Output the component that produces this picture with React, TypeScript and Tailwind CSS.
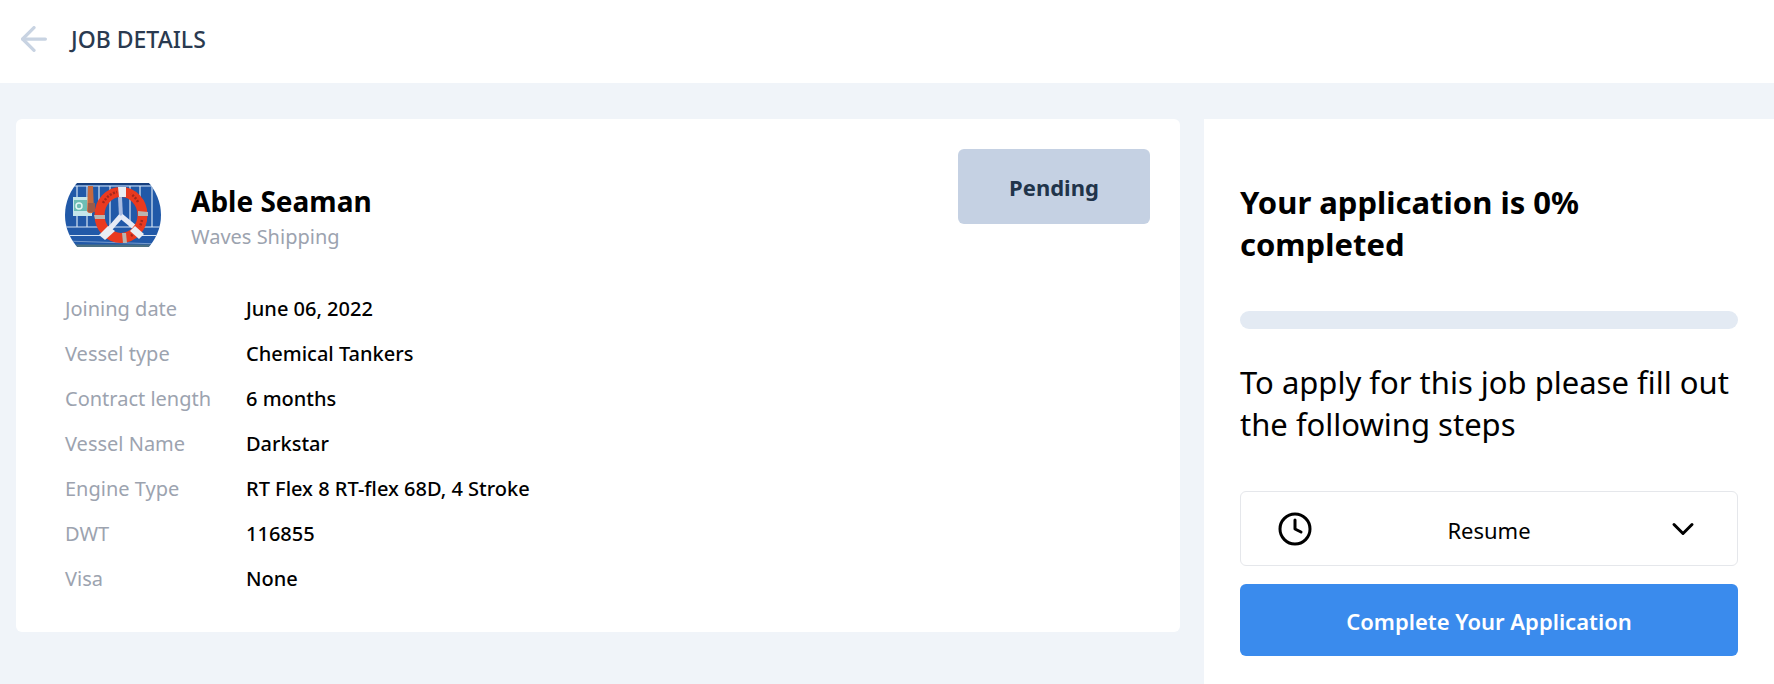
import { ArrowLeft, ChevronDown, Clock4 } from "lucide-react";

const details = [
  { label: "Joining date", value: "June 06, 2022" },
  { label: "Vessel type", value: "Chemical Tankers" },
  { label: "Contract length", value: "6 months" },
  { label: "Vessel Name", value: "Darkstar" },
  { label: "Engine Type", value: "RT Flex 8 RT-flex 68D, 4 Stroke" },
  { label: "DWT", value: "116855" },
  { label: "Visa", value: "None" },
];

// Life ring hanging on a blue ship wall
const CompanyPhoto = () => {
  return (
    <svg viewBox="0 0 96 64" className="w-24" role="img" aria-label="Waves Shipping">
      <rect width="96" height="64" fill="#2159a8" />
      <path d="M0 0h96v2H0z" fill="#17407f" />
      <g stroke="#d5e4f4" fill="none">
        <path d="M0 3h96M12 3v41M22 3v41M34 3v41M45 3v41M65 3v41M75 3v41M87 3v41" strokeWidth="1.200" />
        <path d="M0 44h96M0 52.500h96" strokeWidth="1.200" />
        <path d="M0 58l96 3" strokeWidth="0.800" opacity="0.600" />
      </g>
      <path d="M0 61.500h96V64H0z" fill="#4c7183" />
      <rect x="8" y="14" width="19" height="19" fill="#c5e6ea" />
      <rect x="9" y="17" width="13" height="11" fill="#6dbdb4" />
      <circle cx="14" cy="23" r="3" fill="none" stroke="#e4f6f4" strokeWidth="1.500" />
      <path d="M23 3h5l1 25c-1 3-6 3-7 0z" fill="#c8693d" />
      <path d="M23 20h7v9h-7z" fill="#9c5a48" />
      <path d="M55 14L56 34" stroke="#a9bce0" strokeWidth="4" />
      <path d="M56 33L42 49M56 33L74 48" stroke="#e6ebf5" strokeWidth="5" />
      <ellipse cx="56" cy="32" rx="21.500" ry="23" fill="none" stroke="#ea3a1f" strokeWidth="10" />
      <path d="M38 20a21 23 0 0 1 14-11M73 19a21 23 0 0 0-7-8M77 37l-2 7M66 53l4-3" stroke="#6f1c1c" strokeWidth="2.500" strokeDasharray="2 1.500" fill="none" opacity="0.600" />
      <g fill="#e9edf3">
        <path d="M53 4h8v10h-7z" />
        <path d="M34 52l9-9 7 5-10 9z" />
        <path d="M70 43l9 8-5 5-9-8z" />
      </g>
      <g fill="#b9b5b0">
        <path d="M29 32h11v4H30z" />
        <path d="M73 28l10 1v4H73z" />
        <path d="M57 50h4l1 10h-4z" />
      </g>
    </svg>
  );
};

const Header = () => {
  return (
    <header className="flex items-center gap-6 bg-white px-[21px] pt-[19px] pb-6">
      <a href="#jobs" aria-label="Back to jobs" className="text-[#c8d3e2]">
        <ArrowLeft className="size-[26px]" viewBox="4 4 16 16" strokeWidth={2} />
      </a>
      <h1 className="text-[23px] leading-10 font-medium text-[#2a3a50]">JOB DETAILS</h1>
    </header>
  );
};

const JobCard = () => {
  return (
    <section className="flex-1 rounded-md bg-white pt-12 pr-[30px] pb-[31px] pl-[49px]">
      <div className="flex items-start justify-between">
        <div className="flex items-center gap-[30px]">
          <div className="flex size-24 items-center overflow-hidden rounded-full">
            <CompanyPhoto />
          </div>
          <div className="pt-1">
            <h2 className="text-[28px] leading-10 font-bold">Able Seaman</h2>
            <p className="text-[20px] leading-8 text-[#9ca3af]">Waves Shipping</p>
          </div>
        </div>
        <div className="-mt-[18px] w-48 rounded-md bg-[#c5d1e3] pt-5 pb-[19px] text-center text-[22px] leading-9 font-bold text-[#21344a]">
          Pending
        </div>
      </div>

      <table className="mt-[23px] text-left text-[20px] leading-[45px]">
        <tbody>
          {details.map(({ label, value }) => (
            <tr key={label}>
              <th scope="row" className="w-[181px] p-0 font-normal text-[#9ca3af]">{label}</th>
              <td className="p-0 font-medium">{value}</td>
            </tr>
          ))}
        </tbody>
      </table>
    </section>
  );
};

const ApplicationPanel = () => {
  return (
    <aside className="flex w-[570px] flex-col self-stretch bg-white px-9 pt-[62px] pb-7">
      <h2 className="text-[31px] leading-[42px] font-bold">Your application is 0% completed</h2>
      <div role="progressbar" aria-label="Application progress" aria-valuenow={0} className="mt-[46px] h-[18px] rounded-full bg-[#e3eaf3]" />
      <p className="mt-8 text-[31px] leading-[42px]">To apply for this job please fill out the following steps</p>

      <button type="button" className="mt-[46px] flex h-[75px] items-center justify-between rounded-md border border-gray-200 px-9 text-[22px]">
        <Clock4 className="size-9" strokeWidth={2} />
        <span className="pt-1">Resume</span>
        <ChevronDown className="size-9" strokeWidth={2} />
      </button>
      <button type="button" className="mt-[18px] h-[72px] rounded-md bg-[#3a8bed] pt-0.5 text-[22px] font-semibold text-white">
        Complete Your Application
      </button>
    </aside>
  );
};

const App = () => {
  return (
    <div className="flex min-h-screen flex-col bg-[#f0f4f9] font-['Noto_Sans',sans-serif] text-black">
      <Header />
      <main className="flex flex-1 items-start gap-6 pt-9 pl-4">
        <JobCard />
        <ApplicationPanel />
      </main>
    </div>
  );
};

export default App;
